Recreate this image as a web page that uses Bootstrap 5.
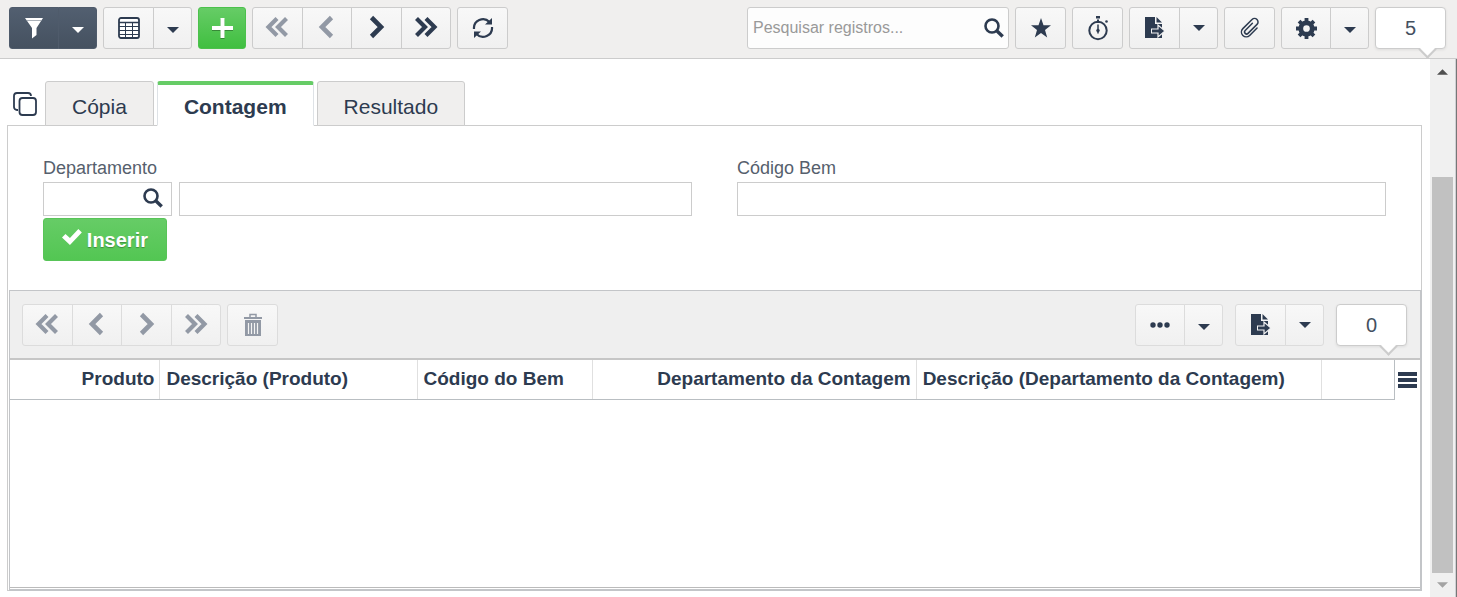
<!DOCTYPE html>
<html lang="pt-BR">
<head>
<meta charset="utf-8">
<meta name="viewport" content="width=device-width, initial-scale=1">
<title>Contagem</title>
<link rel="stylesheet" href="https://cdn.jsdelivr.net/npm/bootstrap@5.3.0/dist/css/bootstrap.min.css">
<style>
:root { --ink: #2d3b50; --line: #ccc; --bar: #f0efee; }
body { font-family: "Liberation Sans", Arial, sans-serif; color: var(--ink); background: #fff; }
svg { display: block; fill: currentColor; }
.app-bar { background: var(--bar); border-bottom: 1px solid var(--line); padding: 7px 11px 9px 9px; gap: 6px; }
.tool { --bs-btn-color: var(--ink); --bs-btn-border-color: var(--line); --bs-btn-hover-border-color: #bbb; --bs-btn-hover-color: var(--ink);
  --bs-btn-disabled-color: #9299a5; --bs-btn-disabled-border-color: var(--line); --bs-btn-disabled-opacity: 1;
  --bs-btn-padding-x: 0; --bs-btn-padding-y: 0; --bs-btn-border-radius: 3px;
  flex: none !important; width: 51px; height: 42px; display: flex; align-items: center; justify-content: center;
  background-image: linear-gradient(#f8f8f8, #f0f0f0); }
.tool.caret { width: 39px; }
.tool.snug { width: 50px; }
.pager { width: 199px; }
.pager .tool { flex: 1 1 0 !important; width: auto; padding-bottom: 2px; }
.tool-dark { --bs-btn-color: #fff; --bs-btn-hover-color: #fff; --bs-btn-border-color: #4f5b6b; background-image: linear-gradient(#525f70, #455160); }
.tool-add { --bs-btn-color: #fff; --bs-btn-hover-color: #fff; --bs-btn-border-color: #4cc14c; width: 48px; background-image: linear-gradient(#66cc66, #40bf40); }
.tool-add svg { filter: drop-shadow(0 1px 0 rgba(0, 0, 0, .3)); }
.search-box { width: 262px; height: 42px; background: #fdfdfd; border: 1px solid var(--line); border-radius: 3px; padding: 0 4px 0 5px; }
.search-box input { font-size: 16px; color: var(--ink); }
.search-box input::placeholder { color: #999; }
.lens-btn { --bs-btn-color: var(--ink); --bs-btn-hover-color: var(--ink); }
.count { position: relative; width: 71px; height: 42px; background: #fff; border: 1px solid var(--line); border-radius: 4px; font-size: 20px; line-height: 40px; text-align: center; color: #44505f; box-shadow: 0 1px 3px rgba(0, 0, 0, .08); }
.count::after { content: ""; position: absolute; right: 11px; bottom: -8px; width: 13px; height: 13px; background: linear-gradient(135deg, transparent 45%, #fff 45%); border: solid var(--line); border-width: 0 2px 2px 0; transform: rotate(45deg); }
.page-area { min-width: 0; padding: 22px 8px 6px 7px; }
.form-tabs { margin-bottom: -1px; position: relative; gap: 3px; --bs-nav-tabs-border-width: 0; }
.form-tabs .nav-link { --bs-nav-link-padding-x: 26px; height: 45px; padding-top: 5px; padding-bottom: 0; margin: 0; border: 1px solid var(--line); border-radius: 3px 3px 0 0; background: var(--bar); color: var(--ink); font-size: 21px; line-height: 40px; }
.form-tabs .nav-link.active { background: #fff; color: var(--ink); font-weight: 700; border-bottom-color: #fff; border-top: 4px solid #66cc66; padding-top: 2px; }
.windows { width: 35px; padding: 0 0 0 6px; border: 0; background: none; color: var(--ink); }
.panel { border: 1px solid var(--line); padding: 0 0 0 1px; }
.fields { padding: 29px 35px 29px 34px; column-gap: 45px; }
.fields label { font-size: 18px; line-height: 26px; padding-bottom: 1px; color: #56606d; }
.field { height: 34px; border: 1px solid var(--line); border-radius: 0; padding: 0 6px; font-size: 18px; }
.dept, .asset { flex: 1 1 0; }
.pair { gap: 7px; }
.code { width: 129px; padding: 0 8px 3px 6px; }
.insert { --bs-btn-color: #fff; --bs-btn-hover-color: #fff; --bs-btn-padding-y: 0; --bs-btn-padding-x: 18px; --bs-btn-border-color: #58c458; --bs-btn-border-radius: 3px; width: 124px; height: 43px; font-size: 20px; font-weight: 700; text-shadow: 0 1px 1px rgba(0, 0, 0, .3); background-image: linear-gradient(#66cc66, #53c653); gap: 5px; margin-top: 2px; }
.insert svg { margin-bottom: 5px; }
.grid-frame { border: 1px solid #c3c5c8; border-width: 1px 2px 2px 1px; margin: 0 -1px -1px 0; }
.grid-bar { background: #efefef; border-bottom: 2px solid #c6c6c6; padding: 13px 13px 12px 12px; gap: 6px; }
.grid-bar .tool { --bs-btn-border-color: #dcdcdc; --bs-btn-disabled-border-color: #dcdcdc; }
.grid-tools { gap: 12px; }
.grid-body { border-bottom: 1px solid #bbb; margin-bottom: 1px; min-height: 0; }
.grid-head { table-layout: fixed; width: calc(100% - 25px); font-size: 19px; }
.grid-head th { height: 39px; padding: 0 5px 1px 6px; line-height: 36px; white-space: nowrap; border-bottom: 1px solid #b9bec2; border-right: 1px solid #e0e0e0; }
.grid-head th:last-child { border-right-color: #b9bec2; }
.grid-menu { width: 25px; height: 38px; padding: 1px 3px 0; border: 0; background: none; color: var(--ink); }
.scroll-track { width: 27px; background: #f0f0f0; border-right: 1px solid #777; box-shadow: inset -1px 0 #d0d0d4; color: #505050; padding: 10px 3px 9px 2px; }
.scroll-gap { flex: 102 1 0; }
.scroll-thumb { flex: 396 1 0; background: #c1c1c1; margin-bottom: 9px; }
.scroll-end { color: #a3a3a3; }
</style>
</head>
<body class="vh-100 d-flex flex-column overflow-hidden">
<svg class="d-none" aria-hidden="true">
  <symbol id="down" viewBox="0 0 12 6"><path d="M0 0h12L6 6z"/></symbol>
  <symbol id="left" viewBox="0 0 24 24"><path d="M16.500 2.500 7 12l9.500 9.500" fill="none" stroke="currentColor" stroke-width="4.600"/></symbol>
  <symbol id="right" viewBox="0 0 24 24"><path d="m7.500 2.500 9.500 9.500-9.500 9.500" fill="none" stroke="currentColor" stroke-width="4.600"/></symbol>
  <symbol id="first" viewBox="0 0 24 24"><path d="m12 3.500-8.500 8.500 8.500 8.500M21.500 3.500 13 12l8.500 8.500" fill="none" stroke="currentColor" stroke-width="4.200"/></symbol>
  <symbol id="last" viewBox="0 0 24 24"><path d="m2.500 3.500 8.500 8.500-8.500 8.500M12 3.500l8.500 8.500-8.500 8.500" fill="none" stroke="currentColor" stroke-width="4.200"/></symbol>
  <symbol id="lens" viewBox="0 0 20 20"><circle cx="8" cy="8" r="6.500" fill="none" stroke="currentColor" stroke-width="2.600"/><path d="m12.500 12.500 6.200 6" stroke="currentColor" stroke-width="3.400"/></symbol>
  <symbol id="export" viewBox="0 0 20 22"><path d="M0 0h10v7h7v14H0z"/><path d="M11.500 0v5.500H17z"/><path d="M6 14h9" stroke="#f4f4f4" stroke-width="5"/><path d="M13 8v12l7-6z" stroke="#f4f4f4" stroke-width="1.200"/><path d="M7 14h8" stroke="currentColor" stroke-width="3"/></symbol>
</svg>

<header class="app-bar d-flex flex-shrink-0" role="toolbar">
  <div class="btn-group">
    <button type="button" class="btn tool tool-dark snug" aria-label="Filtrar"><svg width="20" height="22" viewBox="0 0 20 22"><path d="M1 1h18l-6.500 10v7L8 21.500V11z"/><path d="M3 3.500h14" stroke="#aab0b8"/></svg></button>
    <button type="button" class="btn tool tool-dark caret" aria-label="Opções de filtro"><svg class="mt-1" width="12" height="6"><use href="#down"/></svg></button>
  </div>
  <div class="btn-group">
    <button type="button" class="btn tool" aria-label="Visualização em tabela"><svg width="22" height="22" viewBox="0 0 22 22"><rect x="1" y="1" width="20" height="20" rx="2" fill="#fff" stroke="currentColor" stroke-width="1.800"/><path d="M1 5.500h20" stroke="currentColor" stroke-width="1.500"/><path d="M1 9.500h20M1 13.500h20M1 17.500h20M7.500 5v16M14.500 5v16" stroke="currentColor"/></svg></button>
    <button type="button" class="btn tool caret" aria-label="Opções de visualização"><svg class="mt-1" width="12" height="6"><use href="#down"/></svg></button>
  </div>
  <button type="button" class="btn tool tool-add" aria-label="Adicionar"><svg width="21" height="20" viewBox="0 0 21 20"><path d="M8.500 0h4v8H21v4h-8.500v8h-4v-8H0V8h8.500z"/></svg></button>
  <div class="btn-group pager">
    <button type="button" class="btn tool" disabled aria-label="Primeiro"><svg width="24" height="24"><use href="#first"/></svg></button>
    <button type="button" class="btn tool" disabled aria-label="Anterior"><svg width="24" height="24"><use href="#left"/></svg></button>
    <button type="button" class="btn tool" aria-label="Próximo"><svg width="24" height="24"><use href="#right"/></svg></button>
    <button type="button" class="btn tool" aria-label="Último"><svg width="24" height="24"><use href="#last"/></svg></button>
  </div>
  <button type="button" class="btn tool" aria-label="Atualizar"><svg width="22" height="22" viewBox="0 0 22 22"><path d="M2 12a9 9 0 0 1 15.500-7M20 10a9 9 0 0 1-15.500 7" fill="none" stroke="currentColor" stroke-width="2.200"/><path d="M20 1v6.500h-7zM2 21v-6.500h7z"/></svg></button>

  <div class="search-box d-flex align-items-center ms-auto">
    <input type="search" class="form-control border-0 bg-transparent p-0 shadow-none" placeholder="Pesquisar registros..." aria-label="Pesquisar registros">
    <button type="button" class="btn lens-btn border-0 p-0" aria-label="Pesquisar"><svg width="20" height="20"><use href="#lens"/></svg></button>
  </div>
  <button type="button" class="btn tool" aria-label="Favorito"><svg width="20" height="20" viewBox="0 0 20 20"><path d="m10 0 2.500 7.300H20l-6 4.700 2.200 7.500L10 15l-6.200 4.500L6 12 0 7.300h7.500z"/></svg></button>
  <button type="button" class="btn tool" aria-label="Temporizador"><svg width="22" height="26" viewBox="0 0 22 26"><circle cx="11" cy="15.500" r="8.700" fill="none" stroke="currentColor" stroke-width="2"/><path d="M9 1h4v2.500H9zM10 4.500h2V8h-2z"/><circle cx="19.500" cy="6.500" r="1.300"/><path d="M11 9.500v9" stroke="currentColor" stroke-width="1.500"/><circle cx="11" cy="15.500" r="1.700"/></svg></button>
  <div class="btn-group">
    <button type="button" class="btn tool" aria-label="Exportar"><svg width="20" height="22"><use href="#export"/></svg></button>
    <button type="button" class="btn tool caret" aria-label="Opções de exportação"><svg width="12" height="6"><use href="#down"/></svg></button>
  </div>
  <button type="button" class="btn tool" aria-label="Anexos"><svg width="24" height="24" viewBox="0 0 24 24"><path d="M17 7v10.500a4.800 4.800 0 0 1-9.600 0V4.500a3.500 3.500 0 0 1 7 0v12.700a2 2 0 0 1-4 0V7" transform="rotate(45 12 12)" fill="none" stroke="currentColor" stroke-width="1.500" stroke-linecap="round"/></svg></button>
  <div class="btn-group">
    <button type="button" class="btn tool snug" aria-label="Configurações"><svg width="21" height="21" viewBox="0 0 22 22"><circle cx="11" cy="11" r="6" fill="none" stroke="currentColor" stroke-width="5"/><path d="M11 0v4M11 18v4M0 11h4M18 11h4M3.200 3.200l3 3M15.800 15.800l3 3M3.200 18.800l3-3M15.800 6.200l3-3" stroke="currentColor" stroke-width="4"/></svg></button>
    <button type="button" class="btn tool caret" aria-label="Opções de configuração"><svg class="mt-1" width="12" height="6"><use href="#down"/></svg></button>
  </div>
  <output class="count">5</output>
</header>

<div class="d-flex flex-grow-1 overflow-hidden">
  <main class="page-area flex-grow-1 d-flex flex-column">
    <nav class="nav nav-tabs form-tabs flex-shrink-0">
      <button type="button" class="windows" aria-label="Janelas"><svg width="24" height="24" viewBox="0 0 24 24"><g fill="none" stroke="currentColor" stroke-width="1.800"><rect x="6.500" y="6" width="16.500" height="17" rx="3"/><path d="M5 18H4a3 3 0 0 1-3-3V4a3 3 0 0 1 3-3h11a3 3 0 0 1 3 3"/></g></svg></button>
      <a class="nav-link" href="#copia">Cópia</a>
      <a class="nav-link active" href="#contagem" aria-current="page">Contagem</a>
      <a class="nav-link" href="#resultado">Resultado</a>
    </nav>
    <section class="panel flex-grow-1 d-flex flex-column" id="contagem">
      <form class="fields d-flex">
        <div class="dept">
          <label class="d-block" for="dept-code">Departamento</label>
          <div class="pair d-flex">
            <div class="field code d-flex align-items-center flex-shrink-0">
              <input id="dept-code" type="text" class="form-control border-0 bg-transparent p-0 shadow-none">
              <button type="button" class="btn lens-btn border-0 p-0" aria-label="Buscar departamento"><svg width="20" height="20"><use href="#lens"/></svg></button>
            </div>
            <input type="text" class="form-control field" aria-label="Nome do departamento">
          </div>
          <button type="button" class="btn insert d-flex align-items-center"><svg width="20" height="16" viewBox="0 0 20 16"><path d="m0 8.500 3.500-3.500L8 9l8.500-9L20 3.500 8 16z"/></svg>Inserir</button>
        </div>
        <div class="asset">
          <label class="d-block" for="asset-code">Código Bem</label>
          <input id="asset-code" type="text" class="form-control field">
        </div>
      </form>

      <div class="grid-frame flex-grow-1 d-flex flex-column">
        <div class="grid-bar d-flex" role="toolbar">
          <div class="btn-group pager">
            <button type="button" class="btn tool" disabled aria-label="Primeiro item"><svg width="24" height="24"><use href="#first"/></svg></button>
            <button type="button" class="btn tool" disabled aria-label="Item anterior"><svg width="24" height="24"><use href="#left"/></svg></button>
            <button type="button" class="btn tool" disabled aria-label="Próximo item"><svg width="24" height="24"><use href="#right"/></svg></button>
            <button type="button" class="btn tool" disabled aria-label="Último item"><svg width="24" height="24"><use href="#last"/></svg></button>
          </div>
          <button type="button" class="btn tool" disabled aria-label="Excluir"><svg width="18" height="24" viewBox="0 0 18 24"><path d="M6 4V1.500h6V4" fill="none" stroke="currentColor" stroke-width="1.500"/><path d="M0 4h18v2H0zM1 7h16v16H1z"/><path d="M4.500 10v11M7.500 10v11M10.500 10v11M13.500 10v11" stroke="#f4f4f4" stroke-width="1.200"/></svg></button>
          <div class="grid-tools d-flex ms-auto">
            <div class="btn-group">
              <button type="button" class="btn tool snug" aria-label="Mais"><svg width="20" height="6" viewBox="0 0 20 6"><circle cx="3" cy="3" r="2.700"/><circle cx="10" cy="3" r="2.700"/><circle cx="17" cy="3" r="2.700"/></svg></button>
              <button type="button" class="btn tool caret" aria-label="Mais opções"><svg class="mt-1" width="12" height="6"><use href="#down"/></svg></button>
            </div>
            <div class="btn-group">
              <button type="button" class="btn tool" aria-label="Exportar itens"><svg width="20" height="22"><use href="#export"/></svg></button>
              <button type="button" class="btn tool caret" aria-label="Opções de exportação dos itens"><svg width="12" height="6"><use href="#down"/></svg></button>
            </div>
            <output class="count">0</output>
          </div>
        </div>
        <div class="grid-body d-flex flex-grow-1 align-items-start">
          <table class="grid-head">
            <colgroup><col style="width:10.83%"><col style="width:18.57%"><col style="width:12.64%"><col style="width:23.41%"><col style="width:29.26%"><col></colgroup>
            <thead><tr><th scope="col" class="text-end">Produto</th><th scope="col">Descrição (Produto)</th><th scope="col">Código do Bem</th><th scope="col" class="text-end">Departamento da Contagem</th><th scope="col">Descrição (Departamento da Contagem)</th><th></th></tr></thead>
          </table>
          <button type="button" class="grid-menu" aria-label="Colunas"><svg width="19" height="16" viewBox="0 0 19 16"><path d="M0 0h19v4H0zM0 6h19v4H0zM0 12h19v4H0z"/></svg></button>
        </div>
      </div>
    </section>
  </main>
  <div class="scroll-track d-flex flex-column flex-shrink-0" aria-hidden="true">
    <svg class="mx-auto flex-shrink-0" width="11" height="6" viewBox="0 0 12 6"><path d="M0 6h12L6 0z"/></svg>
    <div class="scroll-gap"></div>
    <div class="scroll-thumb"></div>
    <svg class="scroll-end mx-auto flex-shrink-0" width="11" height="6"><use href="#down"/></svg>
  </div>
</div>
<script src="https://cdn.jsdelivr.net/npm/bootstrap@5.3.0/dist/js/bootstrap.bundle.min.js"></script>
</body>
</html>
